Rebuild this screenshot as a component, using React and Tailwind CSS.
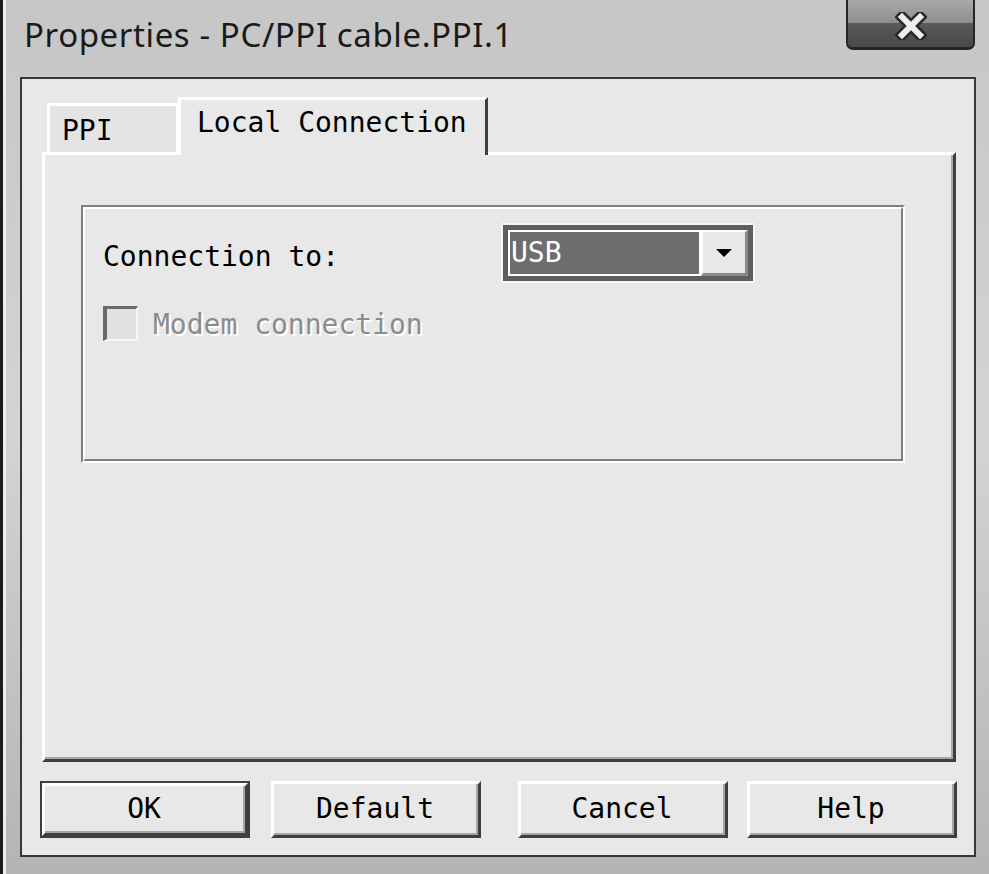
const mono = "font-['DejaVu_Sans_Mono',monospace] text-[28px] leading-none";

function CloseButton() {
  return (
    <div className="mr-[1px] flex h-[50px] w-[129px] shrink-0 flex-col overflow-hidden rounded-b-[7px] border-x-2 border-b-[3px] border-[#262626] bg-gradient-to-b from-[#a8a8a8] via-[#8e8e8e] to-[#4a4a4a]">
      <div className="relative flex flex-1 items-center justify-center pt-[5px]">
        <div className="absolute inset-x-0 bottom-0 h-[24px] bg-gradient-to-b from-[#5a5a5a] to-[#484848]" />
        <svg width="32" height="28" viewBox="0 0 32 28" className="relative">
          <path d="M7 5 L25 23 M25 5 L7 23" stroke="#2a2a2a" strokeWidth="11" strokeLinecap="square" />
          <path d="M7 5 L25 23 M25 5 L7 23" stroke="#eeeeee" strokeWidth="6" strokeLinecap="square" />
        </svg>
      </div>
    </div>
  );
}

function Button({ label, isDefault, className }) {
  const face = (
    <div className="flex h-full w-full border-t-[3px] border-l-[3px] border-t-white border-l-white border-b-[3px] border-r-[3px] border-b-[#3e3e3e] border-r-[#3e3e3e]">
      <div className={`flex flex-1 items-center justify-center border-b-2 border-r-2 border-[#a6a6a6] text-black ${mono}`}>
        {label}
      </div>
    </div>
  );
  return (
    <div className={`h-[57px] w-[210px] shrink-0 ${className}`}>
      {isDefault ? <div className="h-full w-full border-2 border-[#3e3e3e]">{face}</div> : face}
    </div>
  );
}

export default function App() {
  return (
    <div className="h-[874px] w-[989px] overflow-hidden bg-[#c4c4c4]">
      <div className="flex h-full flex-col border-l-[3px] border-[#1c1c1c] bg-gradient-to-b from-[#c6c6c6] via-[#d4d4d4] to-[#b4b4b4] pb-[17px] pl-[17px] pr-[13px] shadow-[inset_3px_0_0_#eeeeee]">
        {/* title bar */}
        <div className="flex h-[77px] shrink-0 items-start">
          <div className="pl-[4px] pt-[18px] font-['Noto_Sans',sans-serif] text-[33px] leading-[33px] tracking-[0.6px] text-[#1a1a1a]">
            Properties - PC/PPI cable.PPI.1
          </div>
          <div className="ml-auto">
            <CloseButton />
          </div>
        </div>

        {/* client area */}
        <div className="flex flex-1 flex-col border-2 border-[#383838] bg-[#e8e8e8]">
          {/* tabs */}
          <div className="relative z-10 -mb-[3px] ml-[20px] mt-[18px] flex h-[58px] items-end">
            <div className="mb-[3px] ml-[5px] flex h-[49px] w-[131px] items-center border-l-[3px] border-r-2 border-t-[3px] border-white bg-[#e4e4e4] pl-[12px] pt-[4px]">
              <span className={`text-black ${mono}`}>PPI</span>
            </div>
            <div className="flex h-[58px] w-[310px] items-start border-l-[3px] border-r-[3px] border-t-[3px] border-l-white border-t-white border-r-[#3e3e3e] bg-[#e8e8e8] pl-[16px] pt-[9px]">
              <span className={`text-black ${mono}`}>Local Connection</span>
            </div>
          </div>

          {/* panel */}
          <div className="ml-[20px] mr-[18px] flex h-[610px] border-l-[3px] border-t-[3px] border-l-white border-t-white border-b-[3px] border-r-[3px] border-b-[#3e3e3e] border-r-[#3e3e3e]">
            <div className="flex-1 border-b-2 border-r-2 border-[#a6a6a6]">
              {/* group box */}
              <div className="ml-[36px] mt-[50px] h-[258px] w-[824px] border-l-2 border-t-2 border-l-[#808080] border-t-[#808080] border-b-2 border-r-2 border-b-white border-r-white">
                <div className="h-full border-l-2 border-t-2 border-l-white border-t-white border-b-2 border-r-2 border-b-[#808080] border-r-[#808080] pl-[18px] pt-[14px]">
                  <div className="flex items-start">
                    <span className={`mt-[20px] w-[398px] text-black ${mono}`}>Connection to:</span>
                    <div className="h-[60px] w-[254px] border-2 border-[#f6f6f6]">
                      <div className="flex h-full border-[5px] border-[#5e5e5e]">
                        <div className={`flex flex-1 items-center border-2 border-white bg-[#6e6e6e] pl-[1px] text-white ${mono}`}>
                          USB
                        </div>
                        <div className="flex w-[47px] items-center justify-center border-l-2 border-t-2 border-l-white border-t-white border-b-[3px] border-r-[3px] border-b-[#8a8a8a] border-r-[#8a8a8a] bg-[#e8e8e8]">
                          <svg width="18" height="10" viewBox="0 0 18 10">
                            <path d="M1 1 H17 L9 9 Z" fill="#000" />
                          </svg>
                        </div>
                      </div>
                    </div>
                  </div>
                  <div className="mt-[23px] flex items-center">
                    <div className="h-[35px] w-[35px] border-l-[4px] border-t-[3px] border-l-[#6a6a6a] border-t-[#6a6a6a] border-b-2 border-r-2 border-b-[#f6f6f6] border-r-[#f6f6f6] bg-[#e2e2e2]" />
                    <span className={`ml-[15px] mt-[3px] text-[#8c8c8c] [text-shadow:2px_2px_0_#ffffff] ${mono}`}>Modem connection</span>
                  </div>
                </div>
              </div>
            </div>
          </div>

          {/* buttons */}
          <div className="mt-[19px] flex">
            <Button label="OK" isDefault className="ml-[18px]" />
            <Button label="Default" className="ml-[21px]" />
            <Button label="Cancel" className="ml-[37px]" />
            <Button label="Help" className="ml-[19px]" />
          </div>
        </div>
      </div>
    </div>
  );
}
